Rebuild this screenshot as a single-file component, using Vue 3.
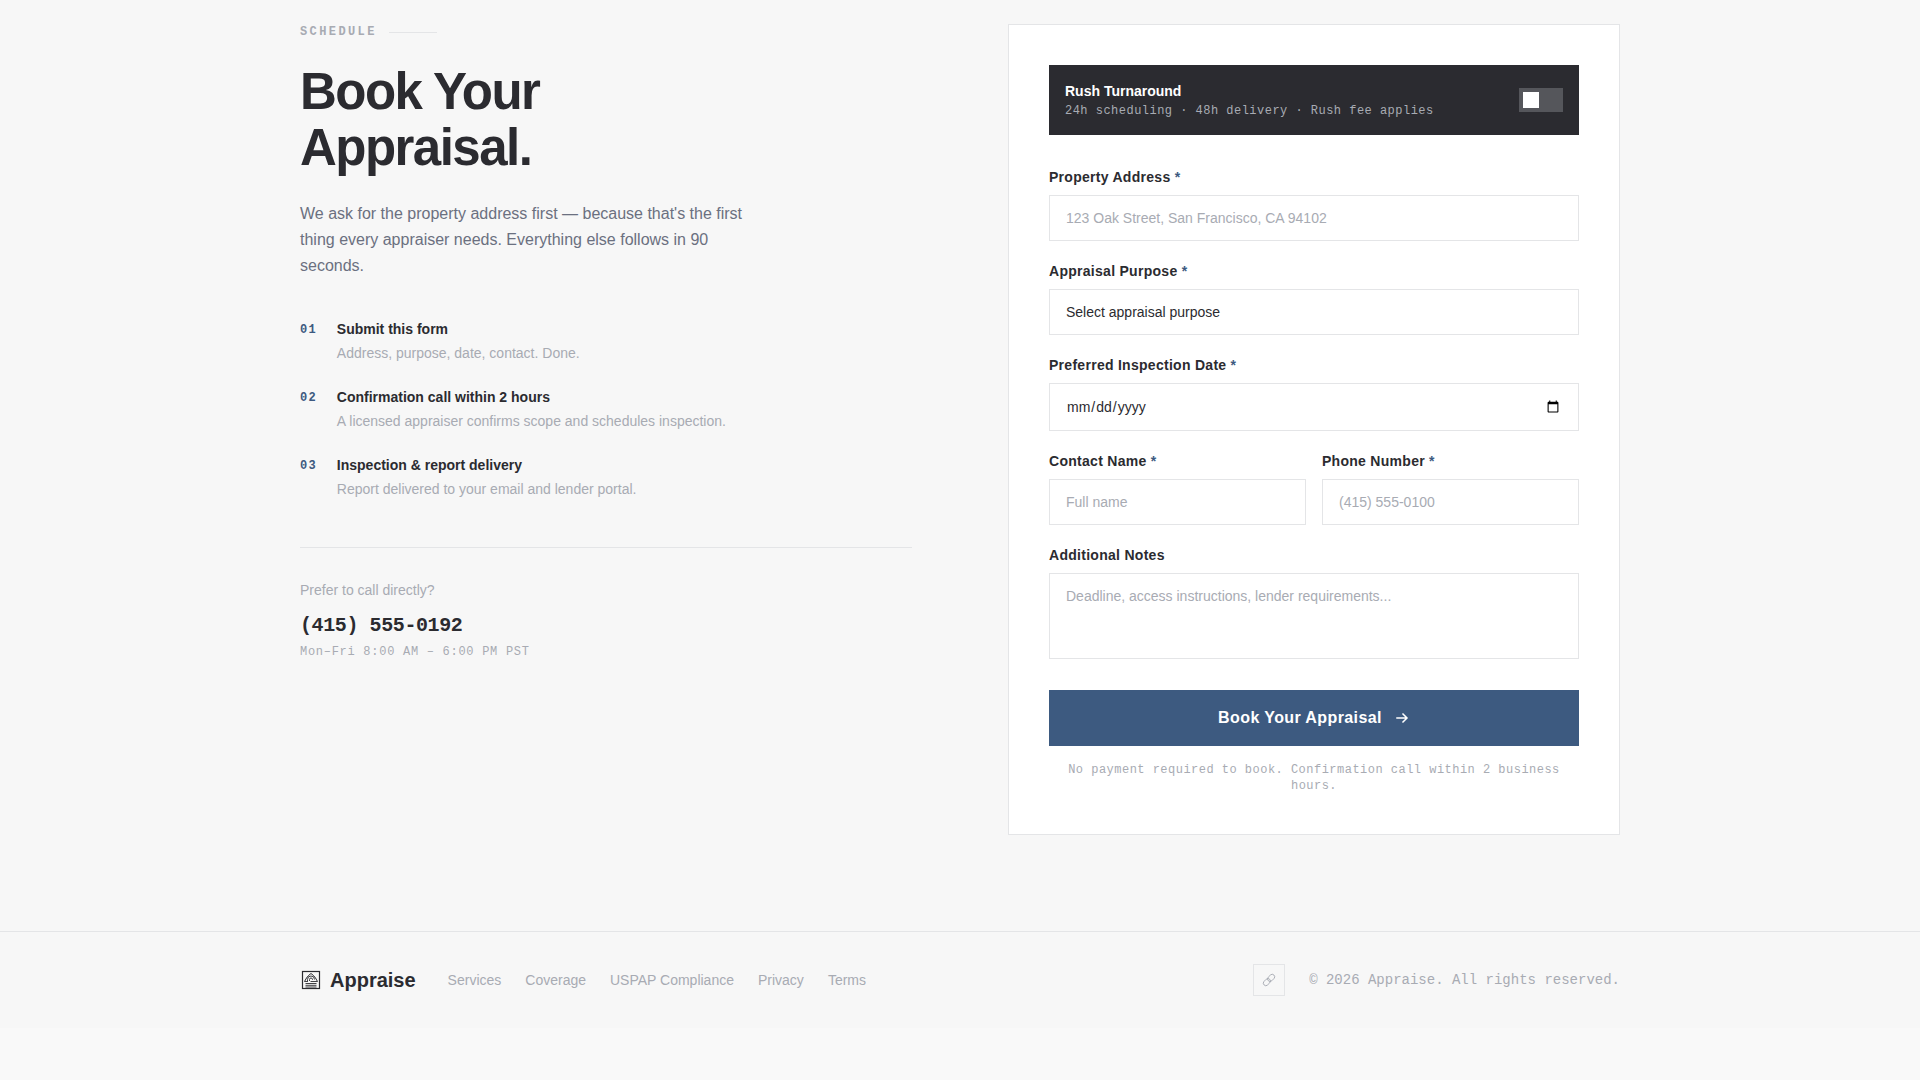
<script setup>
import { ref } from 'vue'

const steps = [
  { num: '01', title: 'Submit this form', text: 'Address, purpose, date, contact. Done.' },
  { num: '02', title: 'Confirmation call within 2 hours', text: 'A licensed appraiser confirms scope and schedules inspection.' },
  { num: '03', title: 'Inspection & report delivery', text: 'Report delivered to your email and lender portal.' },
]
const purposes = ['Purchase', 'Refinance', 'Estate / Probate', 'Divorce', 'Tax Appeal']
const links = ['Services', 'Coverage', 'USPAP Compliance', 'Privacy', 'Terms']

const rush = ref(false)
const form = ref({ address: '', purpose: '', date: '', name: '', phone: '', notes: '' })
</script>

<template>
  <div class="page">
    <main class="container booking">
      <section class="intro">
        <div class="eyebrow">Schedule</div>
        <h1>Book Your<br />Appraisal.</h1>
        <p class="lead">
          We ask for the property address first — because that's the first thing every appraiser
          needs. Everything else follows in 90 seconds.
        </p>
        <ol class="steps">
          <li v-for="step in steps" :key="step.num">
            <span class="num">{{ step.num }}</span>
            <div>
              <h2>{{ step.title }}</h2>
              <p>{{ step.text }}</p>
            </div>
          </li>
        </ol>
        <div class="call">
          <p class="prefer">Prefer to call directly?</p>
          <a class="phone" href="tel:+14155550192">(415) 555-0192</a>
          <p class="hours">Mon–Fri 8:00 AM – 6:00 PM PST</p>
        </div>
      </section>

      <form class="card" @submit.prevent>
        <label class="rush" for="rush">
          <span class="rush-text">
            <span class="rush-title">Rush Turnaround</span>
            <span class="rush-sub">24h scheduling · 48h delivery · Rush fee applies</span>
          </span>
          <input id="rush" v-model="rush" class="toggle" type="checkbox" role="switch" />
        </label>

        <div class="fields">
          <div class="field">
            <label for="address">Property Address <span class="req">*</span></label>
            <input id="address" v-model="form.address" type="text" placeholder="123 Oak Street, San Francisco, CA 94102" />
          </div>
          <div class="field">
            <label for="purpose">Appraisal Purpose <span class="req">*</span></label>
            <select id="purpose" v-model="form.purpose">
              <option value="">Select appraisal purpose</option>
              <option v-for="p in purposes" :key="p" :value="p">{{ p }}</option>
            </select>
          </div>
          <div class="field">
            <label for="date">Preferred Inspection Date <span class="req">*</span></label>
            <input id="date" v-model="form.date" type="date" />
          </div>
          <div class="pair">
            <div class="field">
              <label for="name">Contact Name <span class="req">*</span></label>
              <input id="name" v-model="form.name" type="text" placeholder="Full name" />
            </div>
            <div class="field">
              <label for="phone">Phone Number <span class="req">*</span></label>
              <input id="phone" v-model="form.phone" type="tel" placeholder="(415) 555-0100" />
            </div>
          </div>
          <div class="field">
            <label for="notes">Additional Notes</label>
            <textarea id="notes" v-model="form.notes" placeholder="Deadline, access instructions, lender requirements..."></textarea>
          </div>
        </div>

        <button class="submit" type="submit">
          Book Your Appraisal
          <svg width="16" height="16" viewBox="0 0 16 16" fill="none" stroke="currentColor" stroke-width="1.5" stroke-linecap="square" aria-hidden="true">
            <path d="M3 8h9.5M9 4l4 4-4 4" />
          </svg>
        </button>
        <p class="note">No payment required to book. Confirmation call within 2 business hours.</p>
      </form>
    </main>

    <footer>
      <div class="container bar">
        <a class="brand" href="#">
          <svg width="22" height="22" viewBox="0 0 22 22" fill="none" stroke="currentColor" aria-hidden="true">
            <rect x="2.5" y="2.5" width="17" height="17" stroke-width="1.2" />
            <path d="M4.5 12.5 6.5 9l2-2.5L11 4.5l2.5 2L15.5 9l2 3.5" stroke-width="1" />
            <path d="M7.5 12V10.5a3.5 3.5 0 0 1 7 0M9.5 12v-1.5a1.5 1.5 0 0 1 3 0V11" stroke-width=".9" />
            <path d="M4.5 12.5h3.5M10.5 12.5h7M5.5 14.5h11M5.5 16.3h11M5.5 18h11" stroke-width=".9" />
          </svg>
          Appraise
        </a>
        <nav>
          <a v-for="link in links" :key="link" href="#">{{ link }}</a>
        </nav>
        <a class="share" href="#" aria-label="Copy link">
          <svg width="16" height="16" viewBox="0 0 16 16" fill="none" stroke="currentColor" stroke-width=".9" aria-hidden="true">
            <g transform="rotate(-45 8 8)">
              <rect x="1" y="5.5" width="8" height="5" rx="2.5" />
              <rect x="7" y="5.5" width="8" height="5" rx="2.5" />
            </g>
          </svg>
        </a>
        <span class="copy">© 2026 Appraise. All rights reserved.</span>
      </div>
    </footer>
  </div>
</template>

<style>
body {
  margin: 0;
  background: #f9f9f9;
}
</style>

<style scoped>
* {
  box-sizing: border-box;
}
.page {
  --ink: #2b2b30;
  --body: #6b7080;
  --muted: #a8abb3;
  --line: #e4e5e7;
  --blue: #3d5a80;
  --mono: 'Liberation Mono', monospace;
  background: #f7f7f7;
  color: var(--ink);
  font: 14px/20px 'Liberation Sans', Arial, sans-serif;
}
h1,
h2,
p,
ol {
  margin: 0;
  padding: 0;
}
a {
  color: inherit;
  text-decoration: none;
}
.container {
  max-width: 1320px;
  margin: 0 auto;
}
.booking {
  display: grid;
  grid-template-columns: 1fr 1fr;
  gap: 96px;
  align-items: start;
  padding: 24px 0 96px;
}
.eyebrow {
  display: flex;
  align-items: center;
  gap: 12px;
  margin-bottom: 24px;
  font: bold 12px/16px var(--mono);
  letter-spacing: 0.2em;
  text-transform: uppercase;
  color: var(--muted);
}
.eyebrow::after {
  content: '';
  width: 48px;
  height: 1px;
  background: var(--line);
}
h1 {
  margin-bottom: 25px;
  font-size: 51px;
  line-height: 56px;
  letter-spacing: -0.03em;
}
.lead {
  max-width: 460px;
  margin-bottom: 40px;
  font-size: 16px;
  line-height: 26px;
  color: var(--body);
}
.steps {
  display: grid;
  gap: 24px;
  list-style: none;
}
.steps li {
  display: flex;
  gap: 20px;
}
.num {
  font: bold 12px/22px var(--mono);
  letter-spacing: 0.1em;
  color: var(--blue);
}
h2 {
  margin-bottom: 4px;
  font-size: 14px;
  line-height: 20px;
}
.steps p,
.prefer {
  color: var(--muted);
}
.call {
  margin-top: 48px;
  padding-top: 32px;
  border-top: 1px solid var(--line);
}
.phone {
  display: block;
  margin: 12px 0 4px;
  font: bold 20px/28px var(--mono);
  letter-spacing: -0.02em;
}
.hours {
  font: 12px/16px var(--mono);
  letter-spacing: 0.06em;
  color: var(--muted);
}
.card {
  padding: 40px;
  background: #fff;
  border: 1px solid var(--line);
}
.rush {
  display: flex;
  align-items: center;
  justify-content: space-between;
  margin-bottom: 32px;
  padding: 16px;
  background: var(--ink);
}
.rush-text {
  display: grid;
  gap: 2px;
}
.rush-title {
  font-weight: bold;
  color: #fff;
}
.rush-sub {
  font: 12px/16px var(--mono);
  letter-spacing: 0.04em;
  color: var(--muted);
}
.toggle {
  appearance: none;
  width: 44px;
  height: 24px;
  margin: 0;
  padding: 4px;
  background: #55565b;
}
.toggle::before {
  content: '';
  display: block;
  width: 16px;
  height: 16px;
  background: #fff;
}
.toggle:checked {
  background: var(--blue);
}
.toggle:checked::before {
  margin-left: auto;
}
.fields {
  display: grid;
  gap: 20px;
}
.pair {
  display: grid;
  grid-template-columns: 1fr 1fr;
  gap: 16px;
}
.field {
  display: grid;
  gap: 8px;
}
.field label {
  font-weight: bold;
  letter-spacing: 0.02em;
}
.req {
  color: var(--blue);
}
.field input,
.field select,
.field textarea {
  appearance: none;
  width: 100%;
  margin: 0;
  padding: 14px 16px;
  border: 1px solid var(--line);
  border-radius: 0;
  background: #fff;
  color: var(--ink);
  font-family: inherit;
  font-size: 14px;
  line-height: normal;
}
.field textarea {
  height: 86px;
  resize: none;
}
.field ::placeholder {
  color: var(--muted);
}
.submit {
  display: flex;
  align-items: center;
  justify-content: center;
  gap: 12px;
  width: 100%;
  height: 56px;
  margin: 31px 0 16px;
  border: 0;
  background: var(--blue);
  color: #fff;
  font: bold 16px/24px 'Liberation Sans', Arial, sans-serif;
  letter-spacing: 0.025em;
}
.note {
  font: 12px/16px var(--mono);
  letter-spacing: 0.04em;
  text-align: center;
  color: var(--muted);
}
footer {
  border-top: 1px solid var(--line);
  padding: 32px 0;
}
.bar {
  display: flex;
  align-items: center;
}
.brand {
  display: flex;
  align-items: center;
  gap: 8px;
  margin-right: 32px;
  font-size: 20px;
  line-height: 24px;
  font-weight: bold;
}
nav {
  display: flex;
  gap: 24px;
  color: var(--muted);
}
.share {
  display: grid;
  place-items: center;
  width: 32px;
  height: 32px;
  margin: 0 24px 0 auto;
  border: 1px solid var(--line);
  color: var(--muted);
}
.copy {
  font: 14px/20px var(--mono);
  color: var(--muted);
}
</style>
